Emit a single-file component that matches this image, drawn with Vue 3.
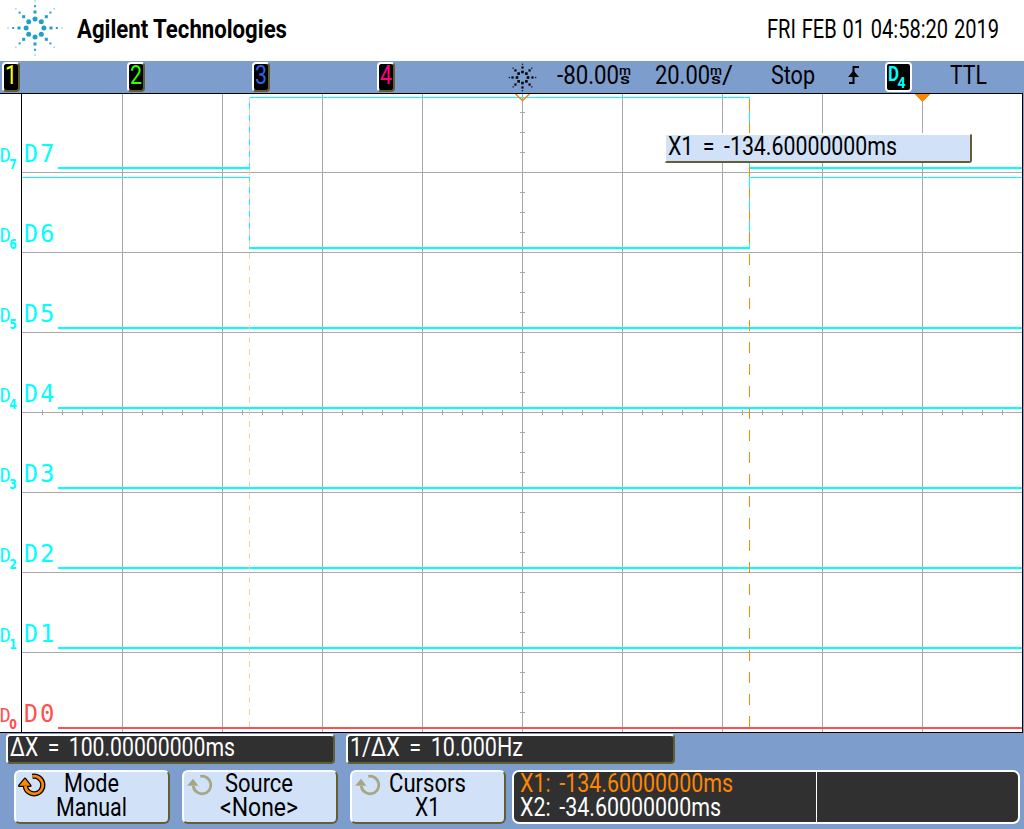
<script setup>
import { h } from 'vue'

// Condensed single-line label with a fixed advance width
const Txt = (p) =>
  h('svg', { width: p.w, height: 28, style: { display: 'block', overflow: 'visible', flex: 'none' } }, [
    h('text', {
      x: 0, y: 22.4, fill: 'currentColor', textLength: p.w, lengthAdjust: 'spacingAndGlyphs',
      'font-size': p.size || 25.4, 'font-weight': p.weight || 400, 'word-spacing': p.ws || 0,
    }, p.t),
  ])
Txt.props = ['t', 'w', 'size', 'weight', 'ws']

// "m" stacked over "s"
const Unit = () =>
  h('svg', { width: 12, height: 28, style: { display: 'block', overflow: 'visible', flex: 'none' }, 'font-weight': 500 }, [
    h('text', { x: 0, y: 13, 'font-size': 13.5, textLength: 12, lengthAdjust: 'spacingAndGlyphs' }, 'm'),
    h('text', { x: 1, y: 22, 'font-size': 14.5, textLength: 10, lengthAdjust: 'spacingAndGlyphs' }, 's'),
  ])

const burst = (rings) =>
  rings.flatMap(([r, s]) =>
    [...Array(8).keys()].map((i) => ({
      x: r * Math.cos((i * Math.PI) / 4), y: r * Math.sin((i * Math.PI) / 4), s,
    }))
  )
const logo = burst([[16, 3], [21.8, 2], [27, 1]])
const logoDots = burst([[8.9, 2.5]])
const star = burst([[5.5, 2.6], [10, 2.2], [13.2, 1.2]])

const channels = [
  { n: 1, c: 'yellow' },
  { n: 2, c: 'green' },
  { n: 3, c: 'blue' },
  { n: 4, c: 'pink' },
]
const cols = [122, 222, 322, 422, 522, 622, 722, 822, 922]
const rows = [172, 252, 332, 412, 492, 572, 652]
const xt = [...Array(49).keys()].map((i) => 42 + i * 20)
const yt = [...Array(31).keys()].map((i) => 112 + i * 20)
const digital = [7, 6, 5, 4, 3, 2, 1, 0].map((n, i) => ({ n, y: 162 + i * 80 }))
const d1 = [...Array(53).keys()].map((i) => 97 + i * 12)
const d2 = [...Array(29).keys()].map((i) => 100 + i * 22)
const keys = [
  { a: 'Mode', aw: 55, b: 'Manual', bw: 71, on: true },
  { a: 'Source', aw: 68, b: '<None>', bw: 78 },
  { a: 'Cursors', aw: 77, b: 'X1', bw: 25 },
]
</script>

<template>
  <div class="scope">
    <header class="head">
      <svg class="logo" width="56" height="56" viewBox="-28 -28 56 56">
        <circle v-for="(d, i) in logoDots" :key="'c' + i" :cx="d.x" :cy="d.y" :r="d.s" />
        <rect v-for="(d, i) in logo" :key="i" :x="d.x - d.s / 2" :y="d.y - d.s / 2" :width="d.s" :height="d.s" />
      </svg>
      <Txt class="brand" t="Agilent Technologies" :w="210" :weight="700" />
      <Txt class="date" t="FRI FEB 01 04:58:20 2019" :w="232" :ws="1" />
    </header>

    <div class="status">
      <div class="chans">
        <div v-for="c in channels" :key="c.n" class="chan" :class="c.c"><Txt :t="c.n" :w="12" /></div>
      </div>
      <svg class="star" width="28" height="28" viewBox="-14.5 -14.5 28 28">
        <rect v-for="(d, i) in star" :key="i" :x="d.x - d.s / 2" :y="d.y - d.s / 2" :width="d.s" :height="d.s" />
      </svg>
      <div class="val delay"><Txt t="-80.00" :w="62" /><Unit /></div>
      <div class="val scale"><Txt t="20.00" :w="55" /><Unit /><Txt t="/" :w="11" /></div>
      <Txt class="stop" t="Stop" :w="44" />
      <svg class="edge" width="12" height="20" viewBox="0 0 12 20">
        <path d="M11 2H5.5V18H1" fill="none" stroke="#000" stroke-width="2" />
        <path d="M5.5 5.5L11 12H0Z" />
      </svg>
      <div class="src">
        <svg width="23" height="26" viewBox="0 0 23 26">
          <text x="1" y="17" font-size="20.5" font-weight="700" textLength="11" lengthAdjust="spacingAndGlyphs">D</text>
          <text x="10.5" y="24" font-size="14" font-weight="700" textLength="8" lengthAdjust="spacingAndGlyphs">4</text>
        </svg>
      </div>
      <Txt class="ttl" t="TTL" :w="37" />
    </div>

    <main class="plotwrap">
      <svg class="plot" width="1024" height="640" viewBox="0 93 1024 640" shape-rendering="crispEdges">
        <rect x="0" y="93" width="1023" height="640" fill="#fff" />
        <g fill="#a8a8a8">
          <rect v-for="x in cols" :key="'x' + x" :x="x" y="94" width="1" height="638" />
          <rect v-for="y in rows" :key="'y' + y" x="22" :y="y" width="1000" height="1" />
          <rect v-for="x in xt" :key="'tx' + x" :x="x" y="410" width="1" height="5" />
          <rect v-for="y in yt" :key="'ty' + y" x="520" :y="y" width="5" height="1" />
        </g>
        <g fill="#00ffff">
          <rect x="58" y="167" width="192" height="2" />
          <rect x="249" y="97" width="1" height="72" />
          <rect x="249" y="97" width="501" height="1" />
          <rect x="749" y="97" width="1" height="152" />
          <rect x="750" y="167" width="272" height="2" />
          <rect x="22" y="177" width="228" height="1" />
          <rect x="249" y="177" width="1" height="72" />
          <rect x="249" y="247" width="501" height="2" />
          <rect x="750" y="177" width="272" height="1" />
          <rect v-for="i in 5" :key="i" x="58" :y="247 + i * 80" width="964" height="2" />
        </g>
        <rect x="58" y="727" width="964" height="2" fill="#ff5050" />
        <rect v-for="y in d1" :key="'a' + y" x="249" :y="y" width="1" height="6" fill="#ffcf94" />
        <rect v-for="y in d2" :key="'b' + y" x="749" :y="y" width="1" height="11" fill="#ff8600" />
        <path d="M515.5 94L522.5 100.5L529.5 94" fill="none" stroke="#ff8600" stroke-width="1.6" shape-rendering="auto" />
        <path d="M915 94H930L922.5 102Z" fill="#ff8600" />
        <rect x="0" y="93" width="1023" height="1" />
        <rect x="0" y="732" width="1023" height="1" />
        <rect x="21" y="93" width="1" height="640" />
        <rect x="1022" y="93" width="1" height="640" />
        <g v-for="d in digital" :key="d.n" :fill="d.n ? '#00ffff' : '#ff5050'" class="lab">
          <text x="24" :y="d.y" font-size="25" textLength="14" lengthAdjust="spacingAndGlyphs">D</text>
          <text x="40" :y="d.y" font-size="25" textLength="14.4" lengthAdjust="spacingAndGlyphs">{{ d.n }}</text>
          <text x="-0.3" :y="d.y" font-size="20" textLength="11" lengthAdjust="spacingAndGlyphs">D</text>
          <text class="sub" x="9.2" :y="d.y + 7" font-size="13.5" textLength="7.6" lengthAdjust="spacingAndGlyphs">{{ d.n }}</text>
        </g>
      </svg>
      <div class="tip"><Txt t="X1 = -134.60000000ms" :w="229" :ws="5" /></div>
    </main>

    <footer class="foot">
      <div class="reads">
        <div class="read"><Txt t="ΔX = 100.00000000ms" :w="225" :ws="5" /></div>
        <div class="read"><Txt t="1/ΔX = 10.000Hz" :w="173" :ws="5" /></div>
      </div>
      <div class="keys">
        <div v-for="k in keys" :key="k.a" class="key">
          <svg class="knob" :class="{ on: k.on }" width="34" height="28" viewBox="0 0 34 28">
            <g v-if="k.on" fill="#000" stroke="#000">
              <path d="M18.3 6.4A8.8 8.8 0 1 1 11.3 16" fill="none" stroke-width="5.2" />
              <path d="M11 8.8L5.2 15.8H16.4Z" stroke-width="2.4" stroke-linejoin="round" />
            </g>
            <path class="arc" d="M18.3 6.4A8.8 8.8 0 1 1 11.3 16" fill="none" />
            <path class="tri" d="M11 8.8L5.2 15.8H16.4Z" />
          </svg>
          <Txt :t="k.a" :w="k.aw" />
          <Txt :t="k.b" :w="k.bw" />
        </div>
        <div class="panel">
          <div class="cell">
            <Txt class="orange" t="X1: -134.60000000ms" :w="213" :ws="4" />
            <Txt t="X2: -34.60000000ms" :w="201" :ws="4" />
          </div>
          <div class="cell"></div>
        </div>
      </div>
    </footer>
  </div>
</template>

<style>
body { margin: 0; background: #fff; }
</style>

<style scoped>
.scope {
  width: 1024px;
  height: 829px;
  overflow: hidden;
  box-sizing: border-box;
  background: #7d9dcd;
  color: #000;
  font-family: Roboto, "Liberation Sans", sans-serif;
}
.head { height: 61px; background: #fff; display: flex; align-items: flex-start; }
.logo { margin: 0 0 0 7px; fill: #1fa0c4; flex: none; overflow: visible; }
.brand { margin: 16px 0 0 14px; }
.date { margin: 16px 0 0 480px; }
.status { height: 32px; display: flex; align-items: flex-start; }
.chans { display: flex; gap: 107px; padding: 1px 0 0 2px; }
.chan {
  width: 18px; height: 30px; box-sizing: border-box; background: #000; border-radius: 4px;
  border: 2px solid #fff; border-right-color: #635d31; border-bottom-color: #635d31; padding-left: 1px;
}
.chan > svg { margin-top: -2px; }
.yellow { color: #ffff00; }
.green { color: #31ff00; }
.blue { color: #2965e7; }
.pink { color: #ff0084; }
.star { margin: 2px 0 0 113px; flex: none; overflow: visible; }
.val { display: flex; margin-top: 1px; }
.delay { margin-left: 21px; }
.scale { margin-left: 24px; }
.stop { margin: 1px 0 0 38px; }
.edge { margin: 4px 0 0 33px; flex: none; }
.src {
  margin: 1px 0 0 25px; width: 27px; height: 30px; box-sizing: border-box; background: #000;
  border: 2px solid #fff; border-radius: 4px; flex: none;
}
.src text { fill: #00ffff; }
.ttl { margin: 1px 0 0 38px; }
.plotwrap { position: relative; height: 640px; }
.plot { display: block; }
.lab { font-family: "DejaVu Sans Mono", monospace; }
.sub { font-family: "DejaVu Sans", sans-serif; font-weight: 700; }
.tip {
  position: absolute; left: 664px; top: 40px; width: 308px; height: 30px; box-sizing: border-box;
  background: #d1e2f8; border: 2px solid #fff; border-right-color: #635d31; border-bottom-color: #635d31;
  border-radius: 3px; padding-left: 2px;
}
.tip > svg { margin-top: -2px; }
.foot { height: 96px; }
.reads { display: flex; gap: 11px; padding: 1px 0 0 6px; }
.read {
  width: 329px; height: 30px; box-sizing: border-box; background: #303030; color: #fff; border-radius: 4px;
  border: 2px solid #fff; border-right-color: #635d31; border-bottom-color: #635d31; padding-left: 2px;
}
.read > svg { margin-top: -2px; }
.keys { display: flex; gap: 12px; padding: 6px 0 0 14px; }
.key {
  position: relative; width: 156px; height: 54px; box-sizing: border-box; background: #d1e2f8; border-radius: 6px;
  border: 2px solid #fff; border-right-color: #635d31; border-bottom-color: #635d31;
  display: flex; flex-direction: column; align-items: center; padding-right: 2px;
}
.key > svg:not(.knob) { margin-top: -2px; }
.key > svg:not(.knob) + svg, .cell > svg + svg { margin-top: -4px !important; }
.knob { position: absolute; left: -2px; top: -2px; }
.arc { stroke: #a5a684; stroke-width: 2.8; }
.tri { fill: #a5a684; }
.on .arc { stroke: #ff8600; }
.on .tri { fill: #ff8600; }
.panel {
  margin-left: -6px; width: 508px; height: 54px; box-sizing: border-box; background: #303030; color: #fff;
  border: 2px solid #fff; border-radius: 7px; display: flex;
}
.cell { flex: 1; padding-left: 6px; }
.cell:first-child { flex: 0 0 296px; border-right: 1px solid #fff; }
.cell > svg { margin-top: -2px; }
.orange { color: #ff8600; }
</style>
